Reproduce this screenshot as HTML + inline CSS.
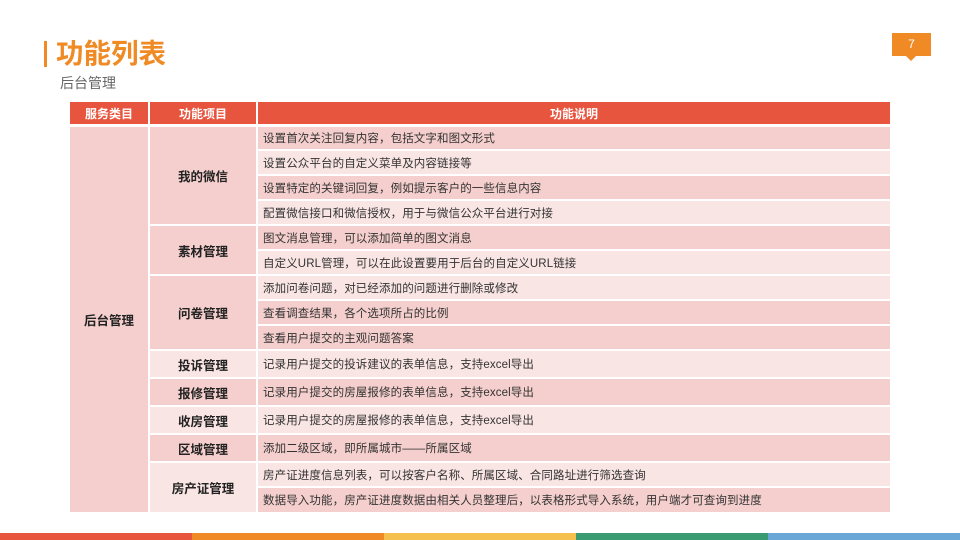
<!DOCTYPE html>
<html><head><meta charset="utf-8"><style>
body{margin:0;width:960px;height:540px;position:relative;background:#fff;font-family:"Liberation Sans","Noto Sans CJK SC",sans-serif;overflow:hidden}
.a{position:absolute;box-sizing:border-box}
.d{background:#f4cfcd}.l{background:#f9e5e3}
.t{font-size:11.5px;color:#333;padding-left:5px;display:flex;align-items:center;white-space:nowrap;letter-spacing:0.1px}
.c{font-size:12.5px;font-weight:bold;color:#222;display:flex;align-items:center;justify-content:center}
.h{background:#e8553f;color:#fff;font-size:12px;font-weight:bold;display:flex;align-items:center;justify-content:center}
</style></head><body>
<div class="a" style="left:44px;top:41px;width:3px;height:26px;background:#f08a24"></div>
<div class="a" style="left:56px;top:34px;font-size:27.5px;font-weight:bold;color:#f08a24;line-height:40px">功能列表</div>
<div class="a" style="left:60px;top:73px;font-size:14px;color:#666">后台管理</div>
<div class="a" style="left:892px;top:33px;width:39px;height:23px;background:#f08a24;color:#fff;font-size:12px;text-align:center;line-height:23px">7</div>
<div class="a" style="left:906px;top:56px;width:0;height:0;border-left:5px solid transparent;border-right:5px solid transparent;border-top:5px solid #f08a24"></div>

<div class="a h" style="left:70px;top:102px;width:78px;height:22px">服务类目</div>
<div class="a h" style="left:150px;top:102px;width:106px;height:22px">功能项目</div>
<div class="a h" style="left:258px;top:102px;width:632px;height:22px">功能说明</div>

<div class="a c d" style="left:70px;top:127px;width:78px;height:385px">后台管理</div>

<div class="a c d" style="left:150px;top:127px;width:106px;height:97px">我的微信</div>
<div class="a c d" style="left:150px;top:226px;width:106px;height:48px">素材管理</div>
<div class="a c d" style="left:150px;top:276px;width:106px;height:73px">问卷管理</div>
<div class="a c l" style="left:150px;top:351px;width:106px;height:26px">投诉管理</div>
<div class="a c d" style="left:150px;top:379px;width:106px;height:26px">报修管理</div>
<div class="a c l" style="left:150px;top:407px;width:106px;height:26px">收房管理</div>
<div class="a c d" style="left:150px;top:435px;width:106px;height:26px">区域管理</div>
<div class="a c l" style="left:150px;top:463px;width:106px;height:49px">房产证管理</div>

<div class="a t d" style="left:258px;top:127px;width:632px;height:22px">设置首次关注回复内容，包括文字和图文形式</div>
<div class="a t l" style="left:258px;top:151px;width:632px;height:23px">设置公众平台的自定义菜单及内容链接等</div>
<div class="a t d" style="left:258px;top:176px;width:632px;height:23px">设置特定的关键词回复，例如提示客户的一些信息内容</div>
<div class="a t l" style="left:258px;top:201px;width:632px;height:23px">配置微信接口和微信授权，用于与微信公众平台进行对接</div>
<div class="a t d" style="left:258px;top:226px;width:632px;height:23px">图文消息管理，可以添加简单的图文消息</div>
<div class="a t l" style="left:258px;top:251px;width:632px;height:23px">自定义URL管理，可以在此设置要用于后台的自定义URL链接</div>
<div class="a t l" style="left:258px;top:276px;width:632px;height:23px">添加问卷问题，对已经添加的问题进行删除或修改</div>
<div class="a t d" style="left:258px;top:301px;width:632px;height:23px">查看调查结果，各个选项所占的比例</div>
<div class="a t d" style="left:258px;top:326px;width:632px;height:23px">查看用户提交的主观问题答案</div>
<div class="a t l" style="left:258px;top:351px;width:632px;height:26px">记录用户提交的投诉建议的表单信息，支持excel导出</div>
<div class="a t d" style="left:258px;top:379px;width:632px;height:26px">记录用户提交的房屋报修的表单信息，支持excel导出</div>
<div class="a t l" style="left:258px;top:407px;width:632px;height:26px">记录用户提交的房屋报修的表单信息，支持excel导出</div>
<div class="a t d" style="left:258px;top:435px;width:632px;height:26px">添加二级区域，即所属城市——所属区域</div>
<div class="a t l" style="left:258px;top:463px;width:632px;height:23px">房产证进度信息列表，可以按客户名称、所属区域、合同路址进行筛选查询</div>
<div class="a t d" style="left:258px;top:488px;width:632px;height:24px">数据导入功能，房产证进度数据由相关人员整理后，以表格形式导入系统，用户端才可查询到进度</div>

<div class="a" style="left:0;top:533px;width:192px;height:7px;background:#e8553f"></div>
<div class="a" style="left:192px;top:533px;width:192px;height:7px;background:#f08a24"></div>
<div class="a" style="left:384px;top:533px;width:192px;height:7px;background:#f6c04f"></div>
<div class="a" style="left:576px;top:533px;width:192px;height:7px;background:#3a9a72"></div>
<div class="a" style="left:768px;top:533px;width:192px;height:7px;background:#6aa7d6"></div>
</body></html>
